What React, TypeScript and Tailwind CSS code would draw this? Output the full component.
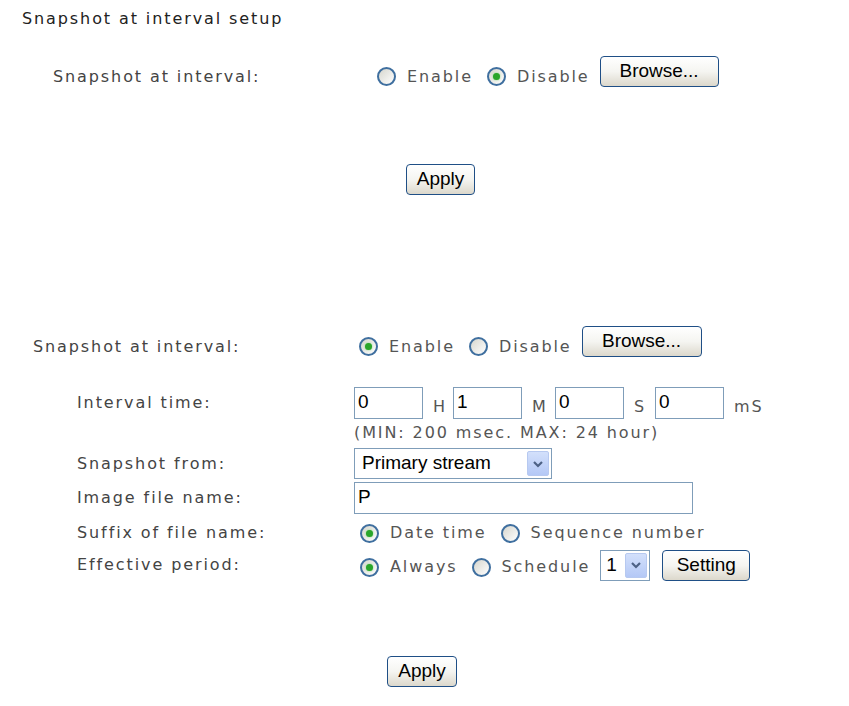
import type { ReactNode } from "react";

const txt = "font-['DejaVu_Sans',sans-serif] text-[16px] tracking-[1.9px] leading-[20px]";
const ctl = "font-['Liberation_Sans',Arial,sans-serif] text-[19px] text-black";

function Radio({ checked, label }: { checked?: boolean; label: string }) {
  return (
    <span className="flex items-center">
      <span className="flex h-[19px] w-[19px] items-center justify-center rounded-full border-2 border-[#3f6f9f] bg-gradient-to-br from-[#d6d6ce] to-white">
        {checked && (
          <span className="h-[7px] w-[7px] rounded-full bg-[#2aa52a] shadow-[0_0_2px_#7ad87a]" />
        )}
      </span>
      <span className={`${txt} ml-[11px] text-[#555]`}>{label}</span>
    </span>
  );
}

function Btn({ children, className }: { children: ReactNode; className: string }) {
  return (
    <button
      type="button"
      className={`${ctl} flex h-[31px] items-center justify-center rounded-[4px] border border-[#1f4f86] bg-gradient-to-b from-white via-[#f5f5f1] to-[#dcd8cc] ${className}`}
    >
      {children}
    </button>
  );
}

function Chevron() {
  return (
    <span className="flex h-[25px] w-[22px] items-center justify-center rounded-[2px] border border-[#b7c9f0] bg-gradient-to-b from-[#d3e0fb] to-[#b4c8f6]">
      <svg width="12" height="10" viewBox="0 0 12 10">
        <path d="M2 3 L6 7 L10 3" fill="none" stroke="#4d6185" strokeWidth="2.2" />
      </svg>
    </span>
  );
}

function Field({ value, className }: { value: string; className: string }) {
  return (
    <span className={`${ctl} flex h-[32px] items-start border border-[#7f9db9] bg-white pl-[3px] pt-[2px] leading-[24px] ${className}`}>
      {value}
    </span>
  );
}

function Label({ children }: { children: ReactNode }) {
  return <span className={`${txt} w-[277px] shrink-0 text-[#444]`}>{children}</span>;
}

export default function App() {
  return (
    <div className="min-h-screen w-full bg-white">
      <div className={`${txt} pl-[22px] pt-[9px] text-[#222]`}>Snapshot at interval setup</div>

      {/* first form: disabled */}
      <div className="mt-[27px] flex h-[32px] items-center">
        <span className={`${txt} ml-[53px] w-[324px] pt-[9px] text-[#444]`}>Snapshot at interval:</span>
        <span className="flex items-center gap-[14px] pt-[9px]">
          <Radio label="Enable" />
          <Radio checked label="Disable" />
        </span>
        <Btn className="ml-[10px] w-[119px] self-start">Browse...</Btn>
      </div>

      <Btn className="ml-[406px] mt-[76px] w-[69px]">Apply</Btn>

      {/* second form: enabled */}
      <div className="mt-[131px] flex h-[32px] items-center">
        <span className={`${txt} ml-[33px] w-[326px] pt-[9px] text-[#444]`}>Snapshot at interval:</span>
        <span className="flex items-center gap-[14px] pt-[9px]">
          <Radio checked label="Enable" />
          <Radio label="Disable" />
        </span>
        <Btn className="ml-[10px] w-[120px] self-start">Browse...</Btn>
      </div>

      <div className="ml-[77px]">
        <div className="mt-[29px] flex items-center">
          <Label>Interval time:</Label>
          <Field value="0" className="w-[69px]" />
          <span className={`${txt} ml-[10px] w-[20px] pt-[8px] text-[#555]`}>H</span>
          <Field value="1" className="w-[69px]" />
          <span className={`${txt} ml-[10px] w-[23px] pt-[8px] text-[#555]`}>M</span>
          <Field value="0" className="w-[69px]" />
          <span className={`${txt} ml-[10px] w-[21px] pt-[8px] text-[#555]`}>S</span>
          <Field value="0" className="w-[69px]" />
          <span className={`${txt} ml-[10px] pt-[8px] text-[#555]`}>mS</span>
        </div>

        <div className={`${txt} ml-[277px] mt-[4px] text-[#555]`}>(MIN: 200 msec. MAX: 24 hour)</div>

        <div className="mt-[5px] flex items-center">
          <Label>Snapshot from:</Label>
          <span className={`${ctl} flex h-[31px] w-[198px] items-center justify-between border border-[#7f9db9] bg-white pl-[7px] pr-[2px]`}>
            Primary stream
            <Chevron />
          </span>
        </div>

        <div className="mt-[3px] flex items-center">
          <Label>Image file name:</Label>
          <Field value="P" className="w-[339px]" />
        </div>

        <div className="mt-[7px] flex h-[24px] items-center">
          <Label>Suffix of file name:</Label>
          <span className="ml-[6px] flex items-center gap-[14px]">
            <Radio checked label="Date time" />
            <Radio label="Sequence number" />
          </span>
        </div>

        <div className="mt-[4px] flex h-[32px] items-center">
          <Label>Effective period:</Label>
          <span className="ml-[6px] flex items-center gap-[14px] pt-[4px]">
            <Radio checked label="Always" />
            <Radio label="Schedule" />
          </span>
          <span className={`${ctl} ml-[10px] flex h-[31px] w-[50px] items-center justify-between border border-[#7f9db9] bg-white pl-[5px] pr-[2px]`}>
            1
            <Chevron />
          </span>
          <Btn className="ml-[12px] w-[88px]">Setting</Btn>
        </div>
      </div>

      <Btn className="ml-[387px] mt-[75px] w-[70px]">Apply</Btn>
    </div>
  );
}
